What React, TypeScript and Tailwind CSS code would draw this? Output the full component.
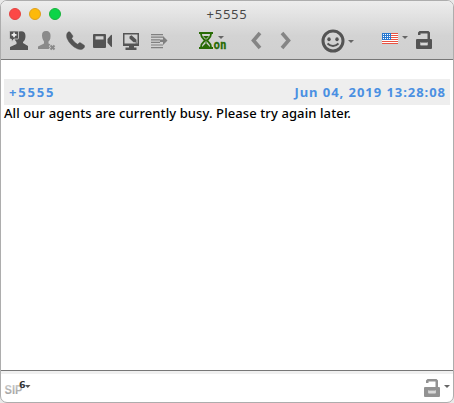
import type { ReactNode } from 'react';

const Glyph = ({ w, label, className = '', children }: { w: number; label: string; className?: string; children: ReactNode }) => (
  <svg aria-label={label} width={w} height={26} viewBox={`0 0 ${w} 26`} className={`shrink-0 ${className}`} fill="currentColor">
    {children}
  </svg>
);

const Caret = ({ className = '' }: { className?: string }) => (
  <svg width="6" height="3" viewBox="0 0 6 3" className={`shrink-0 text-[#666] ${className}`} fill="currentColor">
    <path d="M0 0h6L3 3z" />
  </svg>
);

const Lock = ({ className = '' }: { className?: string }) => (
  <svg width="16" height="19" viewBox="0 0 16 19" className={`shrink-0 ${className}`} fill="currentColor">
    <path fillRule="evenodd" d="M2 4V1.500L3.500 0h9L14 1.500V8h1q1 0 1 1v8q0 1-1 1H1q-1 0-1-1V9q0-1 1-1h10.500V2.500h-7V4zM4.500 11v3.200h7V11z" />
    <path d="M4.500 11h7v3.200h-7z" fill="#d8d8d8" />
    <path d="M4.500 11h7v1h-7z" opacity=".6" />
  </svg>
);

export default function App() {
  return (
    <div className="h-[403px] w-[454px] overflow-hidden bg-[#e9e9e9] font-['Noto_Sans','DejaVu_Sans',sans-serif]">
      <div className="flex h-[403px] w-[454px] flex-col overflow-hidden rounded-[7px] border border-[#adadad] bg-white">
        <header className="h-[59px] shrink-0 border-b border-[#777] bg-linear-to-b from-[#ededed] from-0% via-[#d3d3d3] via-60% to-[#d0d0d0]">
          <div className="grid h-[25px] grid-cols-[80px_1fr_80px] items-center">
            <div className="flex gap-2 pl-2">
              <span className="size-3 rounded-full border border-[#e34442] bg-[#fc4847]" />
              <span className="size-3 rounded-full border border-[#e0a01c] bg-[#fdb90b]" />
              <span className="size-3 rounded-full border border-[#19b33c] bg-[#0bd447]" />
            </div>
            <h1 className="text-center text-[13px] leading-4 tracking-[0.8px] text-[#484848]">+5555</h1>
          </div>
          <div className="flex h-[29px] pt-px pl-[7px] text-[#545454]">
            <Glyph w={20} label="Add contact">
              <path d="M9 5c6-2 8.500 0 8.500 4 0 3-1 5-2.500 6v1l5 3v4H2v-3l6.500-3v-2C6.500 13 6 11 6 8z" />
              <path d="M2.500 4h7q1 0 1 1v6q0 1-1 1H6l-2 2.500L3.200 12h-.7q-1 0-1-1V5q0-1 1-1z" stroke="#d1d1d1" strokeWidth=".8" />
              <path d="M5.200 5.500h1.700V7h1.600v1.700H6.900v1.600H5.200V8.700H3.600V7h1.600z" fill="#eee" />
            </Glyph>
            <Glyph w={18} label="Remove contact" className="ml-[10px] text-[#8a8a8a]">
              <path d="M4 8.500c0-3 1-4.500 4-4.500s5 2 4.500 5.500c0 3-1 4-2 5v2l2 1v4.500H0v-2.500l6-3v-2c-1-1.500-2-3.500-2-6z" />
              <path d="m12 18 5 5m0-5-5 5" stroke="#d1d1d1" strokeWidth="3.500" />
              <path d="m12.500 18.500 4 4m0-4-4 4" stroke="currentColor" strokeWidth="2" />
            </Glyph>
            <Glyph w={20} label="Call" className="ml-[9px]">
              <path d="M2 6.500C2.800 5 4 4.400 5.200 5.200l2.600 3.600c.4.900-.2 1.700-1.100 2.500 1.500 2.500 3.400 4.500 5.900 6l1.400-1.400q.9-.6 1.900 0l3.300 2.300c1 .7.400 1.900-.4 2.800-1.700 1.900-4 1.900-6.500.8C7.700 19.800 3.900 16 2.100 11.500 1.500 9.800 1.300 8 2 6.500z" stroke="currentColor" strokeWidth=".4" />
            </Glyph>
            <Glyph w={21} label="Video call" className="ml-[7px]">
              <path fillRule="evenodd" d="M2 7h11q1 0 1 1v12q0 1-1 1H2q-1 0-1-1V8q0-1 1-1zm1.500 2.200v3.300h8V9.200zM15.500 12l3.500-4q1-.5 1 .7v10.600q0 1-1 .5l-3.500-4z" />
            </Glyph>
            <Glyph w={20} label="Share desktop" className="ml-[8px]">
              <path d="M2 6h16v13h-5v1.500h2.500V23h-11v-2.500H8V19H2z" />
              <path d="M3.500 7.500h13v9h-13z" fill="#d2d2d2" />
              <path d="m8.500 9.500 2-1.200 5 4.500v2.400h-3l-4-3.700z" />
              <path d="M14.500 15.500H16v1h-1.500z" />
            </Glyph>
            <Glyph w={18} label="Transfer" className="ml-[10px] text-[#808080]">
              <path d="M0 7h12v1.200H0zm0 2.600h12v1.200H0zm0 2.600h9v1.200H0zm0 2.600h9V16H0zm0 2.600h12v1.200H0zM0 20h12v1.200H0z" />
              <path d="M9 12.500h3V9l4.500 4.500-4.500 4.500v-3H9z" />
            </Glyph>
            <Glyph w={30} label="Encryption on" className="ml-[29px] text-[#286b05]">
              <path d="M1 5h14v2H1zm0 15h14v2H1z" />
              <path d="M3 7c0 4 3 5 4 6.500C6 15 3 16 3 20m10-13c0 4-3 5-4 6.500 1 1.500 4 2.500 4 6.500" fill="none" stroke="currentColor" strokeWidth="1.800" />
              <path d="M5 9h6l-3 3zM4 20l4-4 4 4zM7.500 12h1v5h-1z" />
              <text x="15.500" y="22" fontSize="12" fontWeight="bold" fontFamily="DejaVu Sans Mono, monospace" textLength="13" lengthAdjust="spacingAndGlyphs" stroke="currentColor" strokeWidth=".3">on</text>
            </Glyph>
            <Caret className="-ml-[10px] mt-[9px]" />
            <Glyph w={12} label="Previous" className="ml-[26px] text-[#858585]">
              <path d="M10 6 3.500 13.500 10 21" fill="none" stroke="currentColor" strokeWidth="3.600" />
            </Glyph>
            <Glyph w={12} label="Next" className="ml-[18px] text-[#858585]">
              <path d="m2 6 6.500 7.500L2 21" fill="none" stroke="currentColor" strokeWidth="3.600" />
            </Glyph>
            <Glyph w={24} label="Smileys" className="ml-[29px]">
              <circle cx="12" cy="14" r="10" fill="none" stroke="currentColor" strokeWidth="3" />
              <ellipse cx="8" cy="12.300" rx="1.700" ry="2" />
              <ellipse cx="16" cy="12.300" rx="1.700" ry="2" />
              <path d="M6.500 16.500q5.500 5 11 0" fill="none" stroke="currentColor" strokeWidth="2" />
            </Glyph>
            <Caret className="ml-[3px] mt-[13px]" />
            <Glyph w={16} label="Spell check language" className="ml-[28px]">
              <path d="M0 6h16v11H0z" fill="#fff" />
              <path d="M0 6.500h16M0 8.500h16M0 10.500h16M0 12.500h16M0 14.500h16M0 16.500h16" stroke="#e95342" strokeWidth="1" />
              <path d="M0 6h9v7H0z" fill="#2878d0" />
              <path d="M1 7.500h7M1 9.500h7M1 11.500h7" stroke="#fff" strokeWidth="1" strokeDasharray="1 1" />
            </Glyph>
            <Caret className="ml-[4px] mt-[9px]" />
            <Lock className="ml-[8px] mt-[4px]" />
          </div>
        </header>

        <main className="flex-1 px-[3px] pt-[19px]">
          <div className="flex h-[26px] items-center justify-between bg-[#eee] pt-px pr-[4px] pl-[5px] text-[13px] font-bold text-[#4a90e2]">
            <span className="tracking-[1.8px]">+5555</span>
            <time className="tracking-[0.95px]">Jun 04, 2019 13:28:08</time>
          </div>
          <p className="text-[13px] leading-[17px] font-medium tracking-[0.1px] whitespace-nowrap text-black">
            All our agents are currently busy. Please try again later.
          </p>
        </main>

        <footer className="flex h-[32px] shrink-0 justify-between border-t border-[#777] shadow-[inset_0_3px_0_#f0f0f0]">
          <svg width="32" height="30" viewBox="0 0 32 30" aria-label="SIP account">
            <defs>
              <linearGradient id="sip" x2="0" y2="1"><stop stopColor="#d5d5d5" /><stop offset="1" stopColor="#999" /></linearGradient>
            </defs>
            <text x="3.500" y="22.500" fontSize="13" fontWeight="bold" fontFamily="Liberation Sans, sans-serif" fill="url(#sip)" textLength="18" lengthAdjust="spacingAndGlyphs">SIP</text>
            <text x="18" y="17" fontSize="9.500" fontWeight="bold" fontFamily="DejaVu Sans, sans-serif" fill="#333">6</text>
            <path d="M24 14h5.500l-2.750 3z" fill="#555" />
          </svg>
          <div className="flex pr-[3px] text-[#929292]">
            <Lock className="mt-[8px]" />
            <Caret className="ml-[4px] mt-[14px]" />
          </div>
        </footer>
      </div>
    </div>
  );
}
